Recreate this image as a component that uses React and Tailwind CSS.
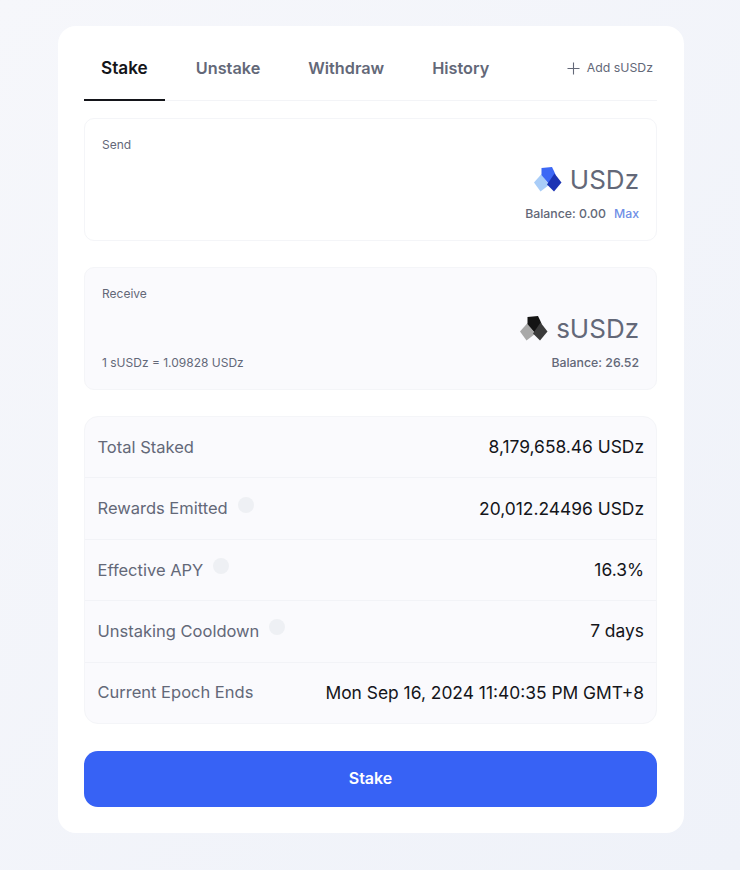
const tabs = ['Stake', 'Unstake', 'Withdraw', 'History']

const stats = [
  { label: 'Total Staked', value: '8,179,658.46 USDz' },
  { label: 'Rewards Emitted', value: '20,012.24496 USDz', info: true },
  { label: 'Effective APY', value: '16.3%', info: true },
  { label: 'Unstaking Cooldown', value: '7 days', info: true },
  { label: 'Current Epoch Ends', value: 'Mon Sep 16, 2024 11:40:35 PM GMT+8' },
]

function TokenLogo({ light, mid, dark }) {
  return (
    <svg width="28" height="25" viewBox="0 0 28 25" className="-mt-[2px]">
      <polygon points="0,15.5 7.5,7 15,18 6.5,24.5" fill={light} />
      <path d="M7.5 1 L18 0 Q20 4 21.5 7.5 L14.5 16.5 L7.5 8 Z" fill={mid} />
      <polygon points="20.5,6.5 27.5,15.5 20,24.5 13,17.5" fill={dark} />
    </svg>
  )
}

export default function App() {
  return (
    <div className="min-h-[870px] pt-[26px] bg-gradient-to-br from-[#f6f7fb] to-[#eff2f9] font-['Inter',sans-serif]">
      <div className="w-[626px] h-[807px] ml-[58px] bg-white rounded-[18px] pl-[26px] pr-[27px]">
        {/* Tabs */}
        <div className="h-[75px] flex items-stretch justify-between border-b border-[#f3f4f7]">
          <div className="flex gap-[14px]">
            {tabs.map((t, i) => (
              <div
                key={t}
                className={`px-[17px] pt-[31px] leading-[22px] font-semibold ${
                  i === 0
                    ? 'text-[17.2px] text-[#14151a] border-b-2 border-[#14151a] -mb-px'
                    : 'text-[16.25px] text-[#636878]'
                }`}
              >
                {t}
              </div>
            ))}
          </div>
          <div className="flex items-center gap-[7px] pr-[4px] pt-[10px] text-[12.3px] text-[#636878]">
            <svg width="13" height="13" viewBox="0 0 13 13" fill="none" stroke="#636878" strokeWidth="1.1">
              <path d="M6.5 0.5v12M0.5 6.5h12" />
            </svg>
            Add sUSDz
          </div>
        </div>

        {/* Send */}
        <div className="mt-[17px] h-[123px] border border-[#f4f5f8] rounded-[10px] pl-[17px] pr-[17px] pt-[18px]">
          <div className="text-[12px] leading-[16px] text-[#636878]">Send</div>
          <div className="flex justify-end items-center gap-[8px] mt-[9px] h-[36px]">
            <TokenLogo light="#a9cdf8" mid="#3d68f5" dark="#1c34b4" />
            <span className="text-[26px] leading-[36px] text-[#636878]">USDz</span>
          </div>
          <div className="flex justify-end gap-[8px] mt-[8px] text-[12.3px] leading-[16px] font-medium">
            <span className="text-[#636878]">Balance: 0.00</span>
            <span className="text-[#6f8fe6]">Max</span>
          </div>
        </div>

        {/* Receive */}
        <div className="mt-[26px] h-[123px] border border-[#f4f5f8] bg-[#fafafd] rounded-[10px] pl-[17px] pr-[17px] pt-[18px]">
          <div className="text-[12px] leading-[16px] text-[#636878]">Receive</div>
          <div className="flex justify-end items-center gap-[8px] mt-[9px] h-[36px]">
            <TokenLogo light="#a8a8a8" mid="#141414" dark="#3a3a3a" />
            <span className="text-[26px] leading-[36px] text-[#636878]">sUSDz</span>
          </div>
          <div className="flex justify-between items-center mt-[8px] leading-[16px]">
            <span className="text-[12px] text-[#636878]">1 sUSDz = 1.09828 USDz</span>
            <span className="text-[12.3px] text-[#636878] font-medium">Balance: 26.52</span>
          </div>
        </div>

        {/* Stats */}
        <div className="mt-[26px] h-[308px] border border-[#f4f5f8] bg-[#fafafd] rounded-[14px] flex flex-col divide-y divide-[#f2f3f7]">
          {stats.map((s) => (
            <div key={s.label} className="flex-1 flex items-center justify-between pl-[12.5px] pr-[12px]">
              <div className="flex items-center gap-[10px] text-[16.5px] text-[#636878]">
                {s.label}
                {s.info && <span className="w-[16px] h-[16px] rounded-full bg-[#eef0f4] -mt-[8px]" />}
              </div>
              <div className="text-[17.4px] text-[#14151a]">{s.value}</div>
            </div>
          ))}
        </div>

        <button className="mt-[27px] w-full h-[56px] pb-[2px] rounded-[14px] bg-[#3762f5] text-white text-[16px] font-semibold">
          Stake
        </button>
      </div>
    </div>
  )
}
